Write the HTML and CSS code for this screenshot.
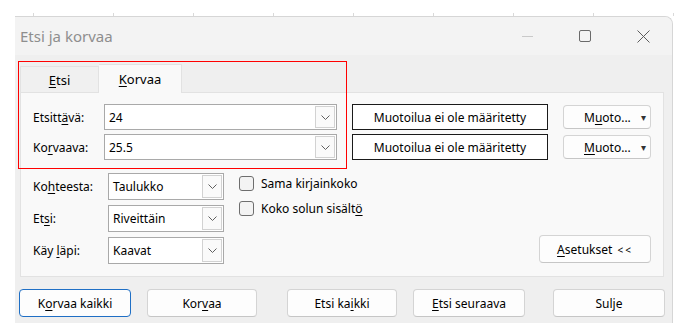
FILE: index.html
```html
<!DOCTYPE html>
<html lang="fi">
<head>
  <meta charset="UTF-8">
  <meta name="viewport" content="width=device-width, initial-scale=1.0">
  <title>Etsi ja korvaa</title>
  <link rel="stylesheet" href="styles.css">
</head>
<body>
  <div class="sheet-grid"></div>

  <div class="dialog">
    <div class="titlebar">
      <span class="title">Etsi ja korvaa</span>
      <div class="window-controls">
        <span class="ctl"><span class="ctl-min"></span></span>
        <span class="ctl"><span class="ctl-max"></span></span>
        <span class="ctl">
          <svg width="13" height="13" viewBox="0 0 13 13">
            <path d="M0.5 0.5 L12.5 12.5 M12.5 0.5 L0.5 12.5" stroke="#5c5c5c" stroke-width="1" fill="none"/>
          </svg>
        </span>
      </div>
    </div>

    <div class="content">
      <div class="tabs">
        <div class="tab"><u>E</u>tsi</div>
        <div class="tab active"><u>K</u>orvaa</div>
      </div>

      <div class="panel">
        <div class="what-grid">
          <span class="label">Etsitt<u>ä</u>vä:</span>
          <div class="combo">
            <span class="combo-value">24</span>
            <span class="combo-btn"><svg width="9" height="5" viewBox="0 0 9 5"><polyline points="0.5,0.5 4.5,4.5 8.5,0.5" stroke="#606060" fill="none"/></svg></span>
          </div>
          <div class="preview">Muotoilua ei ole määritetty</div>
          <button class="btn btn-format"><span>M<u>u</u>oto...</span><span class="caret">&#9662;</span></button>

          <span class="label">Ko<u>r</u>vaava:</span>
          <div class="combo">
            <span class="combo-value">25.5</span>
            <span class="combo-btn"><svg width="9" height="5" viewBox="0 0 9 5"><polyline points="0.5,0.5 4.5,4.5 8.5,0.5" stroke="#606060" fill="none"/></svg></span>
          </div>
          <div class="preview">Muotoilua ei ole määritetty</div>
          <button class="btn btn-format"><span><u>M</u>uoto...</span><span class="caret">&#9662;</span></button>
        </div>

        <div class="options">
          <div class="opt-grid">
            <span class="label">Ko<u>h</u>teesta:</span>
            <div class="combo">
              <span class="combo-value">Taulukko</span>
              <span class="combo-btn"><svg width="9" height="5" viewBox="0 0 9 5"><polyline points="0.5,0.5 4.5,4.5 8.5,0.5" stroke="#606060" fill="none"/></svg></span>
            </div>

            <span class="label">Et<u>s</u>i:</span>
            <div class="combo">
              <span class="combo-value">Riveittäin</span>
              <span class="combo-btn"><svg width="9" height="5" viewBox="0 0 9 5"><polyline points="0.5,0.5 4.5,4.5 8.5,0.5" stroke="#606060" fill="none"/></svg></span>
            </div>

            <span class="label">Käy <u>l</u>äpi:</span>
            <div class="combo">
              <span class="combo-value">Kaavat</span>
              <span class="combo-btn"><svg width="9" height="5" viewBox="0 0 9 5"><polyline points="0.5,0.5 4.5,4.5 8.5,0.5" stroke="#606060" fill="none"/></svg></span>
            </div>
          </div>

          <div class="checks">
            <label class="check"><span class="box"></span><span>Sama kir<u>j</u>ainkoko</span></label>
            <label class="check"><span class="box"></span><span>Koko solun sisält<u>ö</u></span></label>
          </div>

          <button class="btn btn-options"><u>A</u>setukset <span class="chevrons">&lt;&lt;</span></button>
        </div>
      </div>

      <div class="actions">
        <button class="btn btn-wide focused">K<u>o</u>rvaa kaikki</button>
        <button class="btn">Kor<u>v</u>aa</button>
        <button class="btn btn-far">Etsi ka<u>i</u>kki</button>
        <button class="btn btn-wide"><u>E</u>tsi seuraava</button>
        <button class="btn btn-wide btn-close">Sulje</button>
      </div>
    </div>

    <div class="highlight"></div>
  </div>
</body>
</html>
```

FILE: styles.css
```css
body {
  margin: 0;
  background-color: #fff;
  font-family: "Noto Sans", "Segoe UI", sans-serif;
  font-size: 12px;
  color: #000;
}
u {
  text-underline-offset: 2px;
}
.sheet-grid {
  height: 3px;
  margin-top: 13px;
  background-image: linear-gradient(to right, #d9d9d9 1px, transparent 1px);
  background-size: 80px 100%;
  background-position: 33px 0;
}
.dialog {
  position: relative;
  box-sizing: border-box;
  width: 658px;
  height: 307px;
  margin-left: 15px;
  background-color: #efefef;
  border-top: 1px solid #d6d6d6;
  border-right: 1px solid #d6d6d6;
  border-top-right-radius: 8px;
  overflow: hidden;
}
.titlebar {
  display: flex;
  align-items: center;
  height: 38px;
  padding-left: 5px;
  background-color: #f3f3f3;
}
.title {
  font-size: 15px;
  color: #8e8e8e;
}
.window-controls {
  display: flex;
  margin-left: auto;
  height: 100%;
}
.ctl {
  display: flex;
  align-items: center;
  justify-content: center;
  width: 58px;
}
.ctl-min {
  width: 11px;
  height: 1px;
  background-color: #c9c9c9;
}
.ctl-max {
  box-sizing: border-box;
  width: 12px;
  height: 12px;
  border: 1px solid #6a6a6a;
  border-radius: 2px;
}
.content {
  padding: 9px 0 0 5px;
}
.tabs {
  display: flex;
  align-items: flex-end;
  height: 28px;
}
.tab {
  box-sizing: border-box;
  display: flex;
  align-items: center;
  justify-content: center;
  width: 79px;
  height: 26px;
  background-color: #f0f0f0;
  border: 1px solid #e2e2e2;
  border-bottom: none;
  font-size: 13px;
}
.tab.active {
  position: relative;
  width: 83px;
  height: 29px;
  margin-bottom: -1px;
  background-color: #f9f9f9;
  border-left: none;
}
.panel {
  box-sizing: border-box;
  width: 644px;
  height: 185px;
  padding: 11px 12px 12px;
  background-color: #f9f9f9;
  border: 1px solid #e2e2e2;
}
.what-grid {
  display: grid;
  grid-template-columns: 56px 233px 196px 88px;
  grid-auto-rows: 26px;
  column-gap: 15px;
  row-gap: 4px;
  align-items: center;
}
.label {
  white-space: nowrap;
}
.combo {
  box-sizing: border-box;
  display: flex;
  align-items: center;
  height: 100%;
  background-color: #fff;
  border: 1px solid #a9a9a9;
}
.combo-value {
  flex: 1;
  padding-left: 4px;
}
.combo-btn {
  box-sizing: border-box;
  display: flex;
  align-items: center;
  justify-content: center;
  width: 20px;
  height: calc(100% - 2px);
  margin-right: 1px;
  background-color: #fafafa;
  border: 1px solid #d2d2d2;
}
.preview {
  box-sizing: border-box;
  display: flex;
  align-items: center;
  justify-content: center;
  height: 100%;
  background-color: #fff;
  border: 1px solid #1a1a1a;
}
.btn {
  box-sizing: border-box;
  height: 28px;
  padding: 0;
  background-color: #fdfdfd;
  border: 1px solid #d4d4d4;
  border-bottom-color: #c6c6c6;
  border-radius: 4px;
  font: inherit;
  color: #000;
}
.btn-format {
  display: flex;
  align-items: center;
  justify-content: space-between;
  height: 24px;
  padding: 0 4px 0 20px;
}
.caret {
  font-size: 10px;
  color: #333;
}
.options {
  display: flex;
  margin-top: 13px;
}
.opt-grid {
  display: grid;
  grid-template-columns: 75px 116px;
  grid-auto-rows: 27px;
  row-gap: 5px;
  align-items: center;
}
.checks {
  display: flex;
  flex-direction: column;
  gap: 4px;
  margin-left: 15px;
}
.check {
  display: flex;
  align-items: center;
  gap: 7px;
  height: 21px;
}
.box {
  box-sizing: border-box;
  width: 15px;
  height: 15px;
  background-color: #f3f3f3;
  border: 1px solid #6e6e6e;
  border-radius: 3px;
}
.btn-options {
  align-self: flex-end;
  width: 112px;
  margin-left: auto;
  margin-bottom: 1px;
}
.chevrons {
  font-size: 10px;
  letter-spacing: 2px;
  margin-left: 2px;
}
.actions {
  display: flex;
  margin-top: 12px;
  margin-left: -1px;
}
.actions .btn {
  width: 110px;
  margin-right: 16px;
}
.actions .btn-wide {
  width: 112px;
}
.actions .btn-far {
  margin-left: 14px;
}
.actions .btn-close {
  margin-left: 12px;
  margin-right: 0;
}
.btn.focused {
  border-color: #1f6fc5;
}
.highlight {
  position: absolute;
  left: 3px;
  top: 44px;
  box-sizing: border-box;
  width: 329px;
  height: 108px;
  border: 1px solid #f00;
}
```
